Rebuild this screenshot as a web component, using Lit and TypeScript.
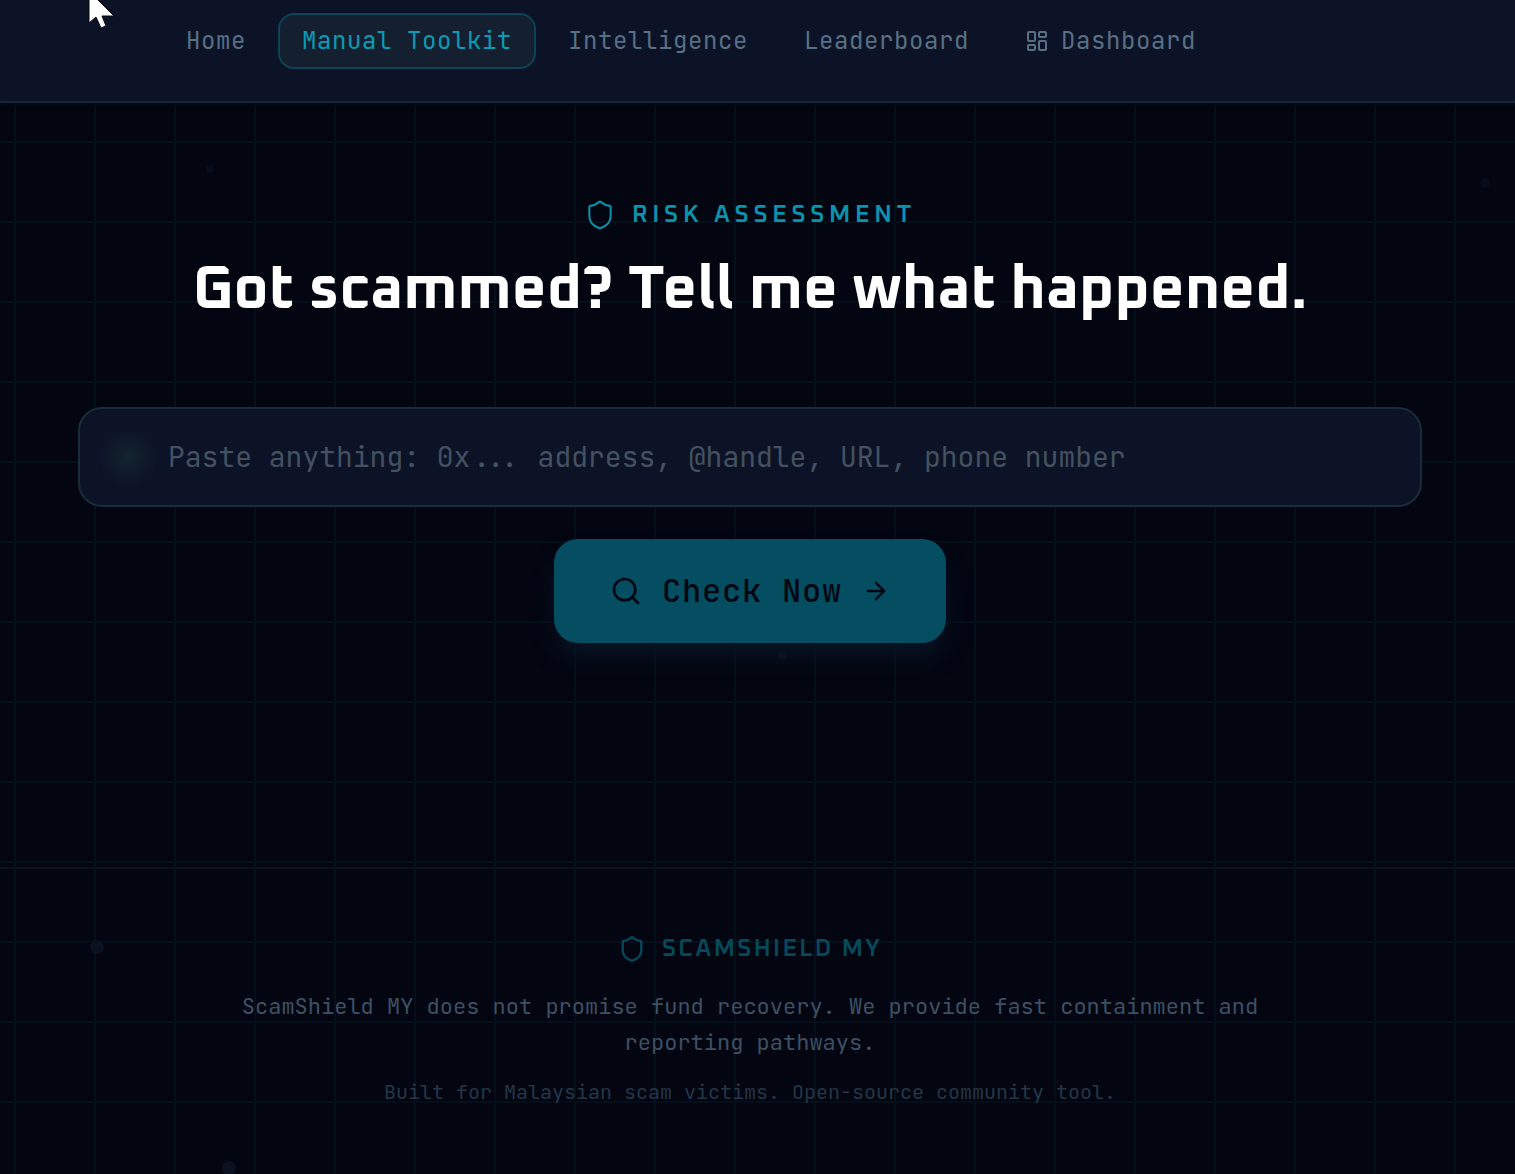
import { LitElement, html, css, svg } from "lit";
import { customElement, state } from "lit/decorators.js";

const shield = svg`<path d="M20 13c0 5-3.5 7.500-7.660 8.950a1 1 0 0 1-.67-.01C7.500 20.500 4 18 4 13V6a1 1 0 0 1 1-1c2 0 4.500-1.200 6.240-2.720a1.170 1.170 0 0 1 1.520 0C14.510 3.810 17 5 19 5a1 1 0 0 1 1 1z"/>`;
const search = svg`<circle cx="11" cy="11" r="8"/><path d="m21 21-4.300-4.300"/>`;
const arrow = svg`<path d="M5 12h14"/><path d="m12 5 7 7-7 7"/>`;
const grid = svg`<rect width="7" height="9" x="3" y="3" rx="1"/><rect width="7" height="5" x="14" y="3" rx="1"/><rect width="7" height="9" x="14" y="12" rx="1"/><rect width="7" height="5" x="3" y="16" rx="1"/>`;

const icon = (shape: unknown, cls: string) => html`
  <svg class="icon ${cls}" viewBox="0 0 24 24" aria-hidden="true">${shape}</svg>`;

interface NavItem {
  label: string;
  href: string;
  icon?: unknown;
}

const NAV: NavItem[] = [
  { label: "Home", href: "#home" },
  { label: "Manual Toolkit", href: "#toolkit" },
  { label: "Intelligence", href: "#intelligence" },
  { label: "Leaderboard", href: "#leaderboard" },
  { label: "Dashboard", href: "#dashboard", icon: grid },
];

@customElement("app-root")
export class AppRoot extends LitElement {
  @state() private active = "Manual Toolkit";
  @state() private query = "";

  static styles = css`
    :host {
      display: flex;
      flex-direction: column;
      position: relative;
      overflow: hidden;
      box-sizing: border-box;
      min-height: 100vh;
      color: #587084;
      background-color: #030611;
      background-image:
        linear-gradient(#040f19 2px, transparent 2px),
        linear-gradient(90deg, #040f19 2px, transparent 2px);
      background-size: 80px 80px;
      background-position: 14px 61px;
      font-family: "JetBrains Mono", "DejaVu Sans Mono", "Liberation Mono", monospace;
    }
    * {
      box-sizing: border-box;
    }
    .icon {
      flex: none;
      width: 32px;
      height: 32px;
      fill: none;
      stroke: currentColor;
      stroke-width: 2;
      stroke-linecap: round;
      stroke-linejoin: round;
    }
    .icon.small {
      width: 24px;
      height: 24px;
    }
    .icon.medium {
      width: 28px;
      height: 28px;
    }
    .icon.thin {
      stroke-width: 1.5;
    }
    .nav {
      display: flex;
      gap: 8px;
      padding: 13px 162px 32px;
      background: #0c1326;
      border-bottom: 2px solid #142632;
      box-shadow: 0 2px 4px #020b14;
    }
    .link {
      display: flex;
      align-items: center;
      gap: 12px;
      height: 56px;
      padding: 0 22px;
      border: 2px solid transparent;
      border-radius: 16px;
      color: inherit;
      font-size: 24px;
      letter-spacing: 0.025em;
      line-height: 32px;
      text-decoration: none;
      white-space: nowrap;
    }
    .link.active {
      color: #0a9bb5;
      background: #14202f;
      border-color: #0d4455;
    }
    .main {
      display: flex;
      flex-direction: column;
      align-items: center;
      padding: 96px 93px 224px 78px;
    }
    .eyebrow,
    .brand {
      display: flex;
      align-items: center;
      gap: 16px;
      margin: 0;
      font-family: Oxanium, Roboto, "Liberation Sans", sans-serif;
      font-size: 24px;
      font-weight: 600;
      line-height: 32px;
      color: #0b93ad;
      letter-spacing: 0.2em;
    }
    .title {
      margin: 24px 0 80px;
      color: #ffffff;
      font-family: Oxanium, Inter, "Liberation Sans", sans-serif;
      font-size: 60px;
      font-weight: 700;
      line-height: 72px;
      text-align: center;
    }
    .form {
      display: flex;
      flex-direction: column;
      align-items: center;
      gap: 32px;
      width: 100%;
    }
    .field {
      width: 100%;
      height: 100px;
      padding: 0 32px 2px 88px;
      border: 2px solid #192c39;
      border-radius: 24px;
      outline: none;
      color: #cbd5e1;
      background: radial-gradient(circle at 48px 50%, #14242f 0, #0c1326 30px);
      font: inherit;
      font-size: 28px;
    }
    .field::placeholder {
      color: #435160;
      opacity: 1;
    }
    .field:focus {
      border-color: #0a9bb5;
    }
    .submit {
      display: flex;
      align-items: center;
      gap: 20px;
      height: 104px;
      padding: 0 56px;
      border: 0;
      border-radius: 24px;
      color: #030712;
      background: #054e61;
      box-shadow: 0 16px 24px -4px #0a1526;
      font: inherit;
      font-size: 32px;
      font-weight: 500;
      line-height: 40px;
      letter-spacing: 0.025em;
      white-space: nowrap;
      cursor: pointer;
    }
    .footer {
      display: flex;
      flex-direction: column;
      align-items: center;
      padding: 64px 93px 64px 78px;
      border-top: 2px solid #0b131f;
      text-align: center;
    }
    .brand {
      color: #07495b;
      letter-spacing: 0.1em;
    }
    .note {
      max-width: 1088px;
      margin: 24px 0 16px;
      color: #3d5064;
      font-size: 22px;
      line-height: 36px;
    }
    .credit {
      margin: 0;
      color: #243648;
      font-size: 20px;
      line-height: 30px;
    }
    .particles,
    .pointer {
      position: absolute;
      top: 0;
      left: 0;
      pointer-events: none;
    }
    .particles {
      width: 100%;
      height: 100%;
      fill: #0a1121;
    }
    .particles .faint {
      fill: #070c1a;
    }
    .pointer {
      left: 88px;
      width: 28px;
      height: 30px;
    }
  `;

  private onInput(e: Event) {
    this.query = (e.target as HTMLInputElement).value;
  }

  render() {
    return html`
      <svg class="particles" aria-hidden="true">
        <circle class="faint" cx="210" cy="169" r="4" />
        <circle class="faint" cx="1485" cy="183" r="5" />
        <circle cx="783" cy="655" r="5" />
        <circle cx="97" cy="947" r="7" />
        <circle cx="229" cy="1168" r="7" />
      </svg>
      <nav class="nav" aria-label="Main">
        ${NAV.map(
          (item) => html`<a
            class="link ${item.label === this.active ? "active" : ""}"
            href=${item.href}
            @click=${() => (this.active = item.label)}
            >${item.icon ? icon(item.icon, "small") : ""}${item.label}</a
          >`
        )}
      </nav>
      <main class="main">
        <p class="eyebrow">${icon(shield, "thin")}RISK ASSESSMENT</p>
        <h1 class="title">Got scammed? Tell me what happened.</h1>
        <form class="form" @submit=${(e: Event) => e.preventDefault()}>
          <input
            class="field"
            type="text"
            aria-label="Paste anything"
            placeholder="Paste anything: 0x... address, @handle, URL, phone number"
            .value=${this.query}
            @input=${this.onInput}
          />
          <button class="submit" type="submit">
            ${icon(search, "")}<span>Check Now</span>${icon(arrow, "medium")}
          </button>
        </form>
      </main>
      <footer class="footer">
        <p class="brand">${icon(shield, "medium")}SCAMSHIELD MY</p>
        <p class="note">
          ScamShield MY does not promise fund recovery. We provide fast containment and reporting
          pathways.
        </p>
        <p class="credit">Built for Malaysian scam victims. Open-source community tool.</p>
      </footer>
      <svg class="pointer" viewBox="0 0 28 30" aria-hidden="true">
        <path
          d="M1-8V23L8 17L13 28L18 26L14 16H26L2-8Z"
          fill="#ffffff"
          stroke="#050812"
          stroke-width="1"
        />
      </svg>
    `;
  }
}
